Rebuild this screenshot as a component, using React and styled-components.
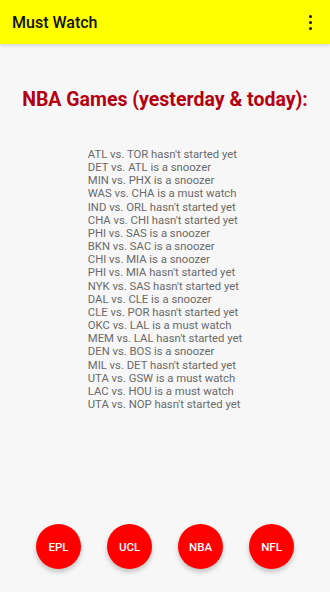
import styled, { createGlobalStyle } from "styled-components"

const Global = createGlobalStyle`
    html, body {
        margin: 0;
        padding: 0;
        background: #f7f7f7;
        font-family: Roboto, "Liberation Sans", sans-serif;
    }
`
const Screen = styled.div`
    width: 330px;
    height: 592px;
    display: flex;
    flex-direction: column;
    background: #f7f7f7;
`
const AppBar = styled.header`
    height: 44px;
    background: #ffff00;
    display: flex;
    align-items: center;
    justify-content: space-between;
    padding: 0 12px;
    box-shadow: 0 2px 3px rgba(0, 0, 0, 0.12);
    flex-shrink: 0;
`
const AppTitle = styled.h1`
    margin: 0;
    font-size: 16px;
    font-weight: 500;
    color: #111;
`
const Dots = styled.div`
    display: flex;
    flex-direction: column;
    gap: 3px;
    padding: 0 6px;
    span {
        width: 3px;
        height: 3px;
        border-radius: 50%;
        background: #111;
    }
`
const Main = styled.main`
    flex: 1;
    display: flex;
    flex-direction: column;
    align-items: center;
    padding-top: 44px;
`
const Heading = styled.h2`
    margin: 0 0 37px;
    font-size: 19.5px;
    font-weight: 700;
    color: #b5000f;
`
const List = styled.div`
    display: flex;
    flex-direction: column;
    font-size: 11.3px;
    line-height: 13.16px;
    color: #6a6a6a;
`
const Footer = styled.nav`
    display: flex;
    justify-content: center;
    gap: 26px;
    padding-bottom: 23px;
`
const Fab = styled.button`
    width: 45px;
    height: 45px;
    border-radius: 50%;
    border: none;
    background: #ff0000;
    color: #fff;
    font-family: Roboto, "Liberation Sans", sans-serif;
    font-size: 11.5px;
    font-weight: 500;
    box-shadow: 0 3px 5px rgba(0, 0, 0, 0.22);
    padding: 0;
`

const games = [
    "ATL vs. TOR hasn't started yet",
    "DET vs. ATL is a snoozer",
    "MIN vs. PHX is a snoozer",
    "WAS vs. CHA is a must watch",
    "IND vs. ORL hasn't started yet",
    "CHA vs. CHI hasn't started yet",
    "PHI vs. SAS is a snoozer",
    "BKN vs. SAC is a snoozer",
    "CHI vs. MIA is a snoozer",
    "PHI vs. MIA hasn't started yet",
    "NYK vs. SAS hasn't started yet",
    "DAL vs. CLE is a snoozer",
    "CLE vs. POR hasn't started yet",
    "OKC vs. LAL is a must watch",
    "MEM vs. LAL hasn't started yet",
    "DEN vs. BOS is a snoozer",
    "MIL vs. DET hasn't started yet",
    "UTA vs. GSW is a must watch",
    "LAC vs. HOU is a must watch",
    "UTA vs. NOP hasn't started yet",
]

export default function App(){
    return(
        <Screen>
            <Global />
            <AppBar>
                <AppTitle>Must Watch</AppTitle>
                <Dots><span/><span/><span/></Dots>
            </AppBar>
            <Main>
                <Heading>NBA Games (yesterday &amp; today):</Heading>
                <List>
                    {games.map((g, i) => <div key={i}>{g}</div>)}
                </List>
            </Main>
            <Footer>
                {["EPL", "UCL", "NBA", "NFL"].map((l) => <Fab key={l}>{l}</Fab>)}
            </Footer>
        </Screen>
    );
}
